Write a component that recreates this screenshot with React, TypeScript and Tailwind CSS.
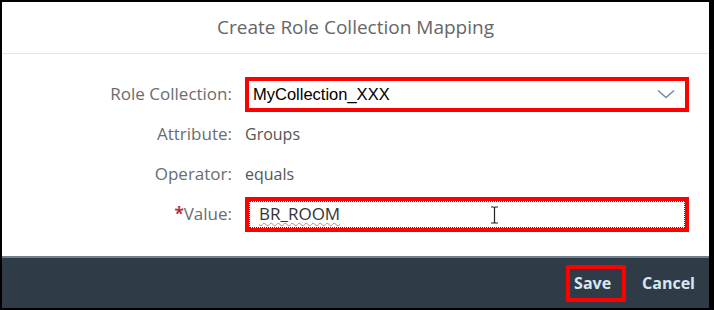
import React from 'react';

const Row: React.FC<{ label: React.ReactNode; children: React.ReactNode }> = ({ label, children }) => (
  <div className="grid grid-cols-[230px_1fr] items-center h-[40px]">
    <div className="text-right text-[17px] text-[#6a6d70]">{label}</div>
    <div className="pl-[13px]">{children}</div>
  </div>
);

const App: React.FC = () => {
  return (
    <div className="w-[714px] h-[310px] bg-black pl-[2px] pt-[2px] pr-[5px] pb-[2px]" style={{ fontFamily: '"Open Sans", "Liberation Sans", sans-serif' }}>
      <div className="h-full bg-white flex flex-col">
        <div className="h-[52px] border-b border-[#e5e5e5] flex items-center justify-center">
          <h1 className="text-[19px] text-[#666666]">Create Role Collection Mapping</h1>
        </div>

        <div className="flex-1 pt-[20px]">
          <Row label="Role Collection:">
            <div className="w-[444px] h-[35px] border-4 border-[#ff0000] bg-white flex items-center justify-between pl-[4px] pr-[10px]">
              <span className="text-[16.5px] text-black" style={{ fontFamily: '"Liberation Sans", Arial, sans-serif' }}>MyCollection_XXX</span>
              <svg width="18" height="10" viewBox="0 0 18 10" fill="none">
                <path d="M1 1.5 L9 8.5 L17 1.5" stroke="#6f8fa8" strokeWidth="1.6" />
              </svg>
            </div>
          </Row>
          <Row label="Attribute:">
            <span className="text-[16px] text-[#555]">Groups</span>
          </Row>
          <Row label="Operator:">
            <span className="text-[16px] text-[#555]">equals</span>
          </Row>
          <Row label={<><span className="text-[#b8323a] font-bold">*</span>Value:</>}>
            <div className="w-[444px] h-[35px] border-4 border-[#ff0000] bg-white">
              <div className="h-full border border-dotted border-[#333] flex items-center pl-[9px] relative">
                <span className="text-[17px] text-[#333] underline decoration-wavy decoration-[#e57373] decoration-1 underline-offset-2">BR_ROOM</span>
                <svg className="absolute left-[240px] top-[4px]" width="9" height="18" viewBox="0 0 9 18" fill="none">
                  <path d="M1 1 H3.5 Q4.5 1 4.5 2 V16 Q4.5 17 3.5 17 H1 M8 1 H5.5 Q4.5 1 4.5 2 M4.5 16 Q4.5 17 5.5 17 H8" stroke="#222" strokeWidth="1.2" />
                </svg>
              </div>
            </div>
          </Row>
        </div>

        <div className="h-[52px] bg-[#2f3b47] border-t-2 border-[#6f7f8e] flex items-center justify-end pr-[14px] gap-[16px]">
          <div className="border-4 border-[#ff0000] h-[37px] w-[60px] pl-[4px] flex items-center">
            <span className="text-[16px] font-bold text-[#d8e6f3]">Save</span>
          </div>
          <span className="text-[16px] font-bold text-[#d8e6f3]">Cancel</span>
        </div>
      </div>
    </div>
  );
};

export default App;
